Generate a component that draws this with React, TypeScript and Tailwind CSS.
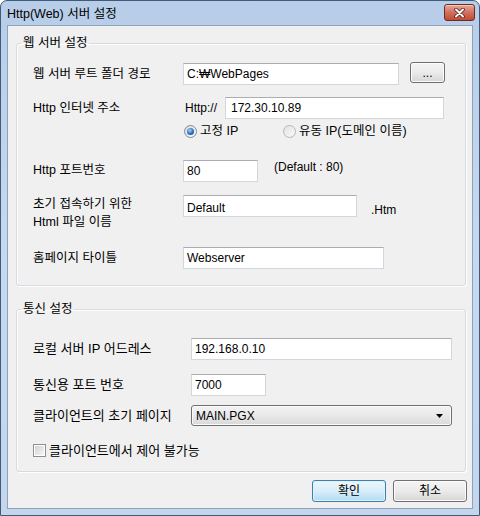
import type { ReactNode } from 'react';

function Field({ value, className }: { value: string; className: string }) {
  return (
    <div
      className={`h-[22px] bg-white border border-[#d3d6dc] border-t-[#abadb3] flex items-center pl-[3px] text-[12px] ${className}`}
    >
      {value}
    </div>
  );
}

function Radio({ checked }: { checked?: boolean }) {
  return (
    <span
      className={`w-[13px] h-[13px] rounded-full border flex items-center justify-center shrink-0 ${
        checked
          ? 'border-[#7f8a96] bg-gradient-to-br from-[#d6dbe1] to-[#fbfbfb]'
          : 'border-[#b3b7bc] bg-gradient-to-br from-[#e2e2e2] to-[#fafafa]'
      }`}
    >
      {checked && (
        <span className="w-[7px] h-[7px] rounded-full bg-[radial-gradient(circle_at_40%_35%,#a6d6f5,#2b6fb2_55%,#0f3d72)]" />
      )}
    </span>
  );
}

function Group({ title, children, className }: { title: string; children: ReactNode; className: string }) {
  return (
    <fieldset
      className={`ml-[8px] w-[450px] border border-[#d5dbe0] rounded-[3px] shadow-[inset_1px_1px_0_#ffffff,1px_1px_0_#ffffff] ${className}`}
    >
      <legend className="ml-[4px] px-[2px] leading-[16px] text-[12.5px]">{title}</legend>
      {children}
    </fieldset>
  );
}

function Button({ label, primary, className }: { label: string; primary?: boolean; className: string }) {
  return (
    <button
      className={`rounded-[3px] border flex items-center justify-center text-[12px] ${
        primary
          ? 'border-[#3c7fb1] bg-gradient-to-b from-[#eef7fc] via-[#d8eefa] to-[#b4dcf2] shadow-[inset_0_0_0_1px_#dff2fc]'
          : 'border-[#707070] bg-gradient-to-b from-[#f4f4f4] via-[#ebebeb] to-[#d6d6d6] shadow-[inset_0_0_0_1px_#fcfcfc]'
      } ${className}`}
    >
      {label}
    </button>
  );
}

export default function App() {
  return (
    <div className="w-[480px] h-[516px] flex flex-col border border-[#3e5b7a] rounded-t-[7px] bg-gradient-to-b from-[#b7cde8] via-[#c7d9ee] to-[#c3d6ec] px-[6px] pb-[6px] text-[12px] text-black font-['Liberation_Sans','Noto_Sans_CJK_KR',sans-serif]">
      {/* title bar */}
      <div className="h-[24px] flex items-start justify-between">
        <span className="mt-[5px] leading-[16px] text-[12.5px]">Http(Web) 서버 설정</span>
        <div className="mt-[3px] -mr-[2px] w-[31px] h-[17px] rounded-[3px] border border-[#6e2b22] bg-gradient-to-b from-[#e4a89c] via-[#d0705e] to-[#c04a32] flex items-center justify-center shadow-[inset_0_1px_0_#f0c8c0]">
          <svg width="11" height="10" viewBox="0 0 11 10">
            <path d="M2 1.5 L9 8.5 M9 1.5 L2 8.5" stroke="#5b1d14" strokeWidth="3.6" strokeLinecap="round" />
            <path d="M2 1.5 L9 8.5 M9 1.5 L2 8.5" stroke="#ffffff" strokeWidth="2" strokeLinecap="round" />
          </svg>
        </div>
      </div>

      {/* client */}
      <div className="flex-1 border border-[#8ea3bb] bg-[#f0f0f0] flex flex-col">
        <Group title="웹 서버 설정" className="mt-[9px]">
          <div className="pt-[12px] pl-[16px] pb-[16px] text-[12.5px]">
            <div className="flex items-center h-[22px]">
              <span className="w-[150px]">웹 서버 루트 폴더 경로</span>
              <Field value="C:₩WebPages" className="w-[216px]" />
              <Button label="..." className="ml-[11px] w-[35px] h-[21px] self-start mt-[-1px]" />
            </div>
            <div className="flex items-center h-[22px] mt-[12px]">
              <span className="w-[150px]">Http 인터넷 주소</span>
              <span className="w-[42px] pl-[2px] text-[12px]">Http://</span>
              <Field value="172.30.10.89" className="w-[219px] pl-[5px]" />
            </div>
            <div className="flex items-center h-[15px] mt-[5px] pl-[151px]">
              <div className="w-[99px] flex items-center gap-[3px]">
                <Radio checked />
                <span>고정 IP</span>
              </div>
              <div className="flex items-center gap-[3px]">
                <Radio />
                <span>유동 IP(도메인 이름)</span>
              </div>
            </div>
            <div className="flex items-start mt-[21px]">
              <span className="w-[150px] leading-[21px]">Http 포트번호</span>
              <Field value="80" className="w-[75px] h-[21px]" />
              <span className="ml-[16px] leading-[14px] text-[12px]">(Default : 80)</span>
            </div>
            <div className="flex items-start mt-[13px]">
              <span className="w-[150px] leading-[18px]">
                초기 접속하기 위한
                <br />
                Html 파일 이름
              </span>
              <Field value="Default" className="w-[174px] items-start pt-[3px]" />
              <span className="ml-[14px] mt-[8px] leading-[14px] text-[12px]">.Htm</span>
            </div>
            <div className="flex items-center h-[22px] mt-[16px]">
              <span className="w-[150px]">홈페이지 타이틀</span>
              <Field value="Webserver" className="w-[201px]" />
            </div>
          </div>
        </Group>

        <Group title="통신 설정" className="mt-[15px]">
          <div className="pt-[21px] pl-[16px] pb-[13px] text-[13px]">
            <div className="flex items-center h-[22px]">
              <span className="w-[158px]">로컬 서버 IP 어드레스</span>
              <Field value="192.168.0.10" className="w-[261px]" />
            </div>
            <div className="flex items-center h-[22px] mt-[14px]">
              <span className="w-[158px]">통신용 포트 번호</span>
              <Field value="7000" className="w-[75px]" />
            </div>
            <div className="flex items-center h-[21px] mt-[9px]">
              <span className="w-[158px]">클라이언트의 초기 페이지</span>
              <div className="w-[261px] h-[21px] rounded-[3px] border border-[#707070] bg-gradient-to-b from-[#f3f3f3] via-[#e9e9e9] to-[#d9d9d9] flex items-center justify-between pl-[4px] pr-[8px] text-[12px] shadow-[inset_0_0_0_1px_#fbfbfb]">
                <span>MAIN.PGX</span>
                <svg width="7" height="4" viewBox="0 0 7 4">
                  <path d="M0 0 H7 L3.5 4 Z" fill="#000000" />
                </svg>
              </div>
            </div>
            <div className="flex items-center h-[15px] mt-[17px]">
              <span className="w-[13px] h-[13px] border border-[#8e8f8f] bg-white p-[1px] shrink-0">
                <span className="block w-full h-full bg-gradient-to-br from-[#d3d3d3] to-[#f6f6f6]" />
              </span>
              <span className="ml-[3px]">클라이언트에서 제어 불가능</span>
            </div>
          </div>
        </Group>

        <div className="flex justify-end gap-[7px] mt-[8px] pr-[5px]">
          <Button label="확인" primary className="w-[74px] h-[22px]" />
          <Button label="취소" className="w-[74px] h-[22px]" />
        </div>
      </div>
    </div>
  );
}
